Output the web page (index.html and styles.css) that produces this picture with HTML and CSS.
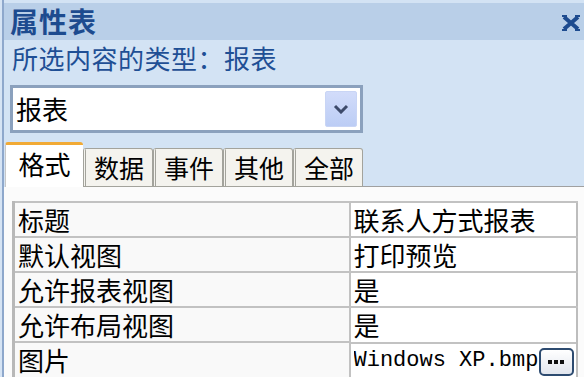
FILE: index.html
```html
<!DOCTYPE html>
<html lang="zh-CN">
<head>
  <meta charset="UTF-8">
  <title>属性表</title>
  <link rel="stylesheet" href="styles.css">
</head>
<body>
  <div class="panel">
    <div class="titlebar">
      <span class="title">属性表</span>
      <svg class="close" width="18" height="16" viewBox="0 0 18 16">
        <path d="M2 2 L16 14 M16 2 L2 14" stroke="#1d4b8f" stroke-width="4" fill="none"/>
        <path d="M0 1h5M13 1h5M0 15h5M13 15h5" stroke="#1d4b8f" stroke-width="2"/>
      </svg>
    </div>
    <div class="kind">所选内容的类型：报表</div>
    <div class="combo">
      <span class="combo-text">报表</span>
      <div class="combo-btn">
        <svg width="16" height="10" viewBox="0 0 16 10">
          <path d="M2 2 L8 8 L14 2" stroke="#3d4a6a" stroke-width="3" fill="none"/>
        </svg>
      </div>
    </div>
    <div class="tabs">
      <div class="tab active">格式</div>
      <div class="tab">数据</div>
      <div class="tab">事件</div>
      <div class="tab">其他</div>
      <div class="tab">全部</div>
      <div class="tab-fill"></div>
    </div>
    <div class="sheet">
      <table class="grid">
        <tr><td class="name">标题</td><td class="val">联系人方式报表</td></tr>
        <tr><td class="name">默认视图</td><td class="val">打印预览</td></tr>
        <tr><td class="name">允许报表视图</td><td class="val">是</td></tr>
        <tr><td class="name">允许布局视图</td><td class="val">是</td></tr>
        <tr>
          <td class="name">图片</td>
          <td class="val pic">
            <span class="file">Windows XP.bmp</span>
            <span class="more">
              <svg width="18" height="6" viewBox="0 0 18 6">
                <rect x="1" y="1" width="4" height="4" fill="#111"/>
                <rect x="7" y="1" width="4" height="4" fill="#111"/>
                <rect x="13" y="1" width="4" height="4" fill="#111"/>
              </svg>
            </span>
          </td>
        </tr>
      </table>
    </div>
  </div>
</body>
</html>
```

FILE: styles.css
```css
*{
  margin: 0;
  padding: 0;
  box-sizing: border-box;
}
body{
  width: 584px;
  height: 377px;
  overflow: hidden;
  background: #d6e4f4;
  padding-left: 2px;
  font-family: "Noto Sans CJK SC", "Liberation Sans", sans-serif;
}
.panel{
  height: 377px;
  border-left: 2px solid #8ea8cc;
  background: #d3e3f4;
  display: flex;
  flex-direction: column;
}
.titlebar{
  margin-top: 3px;
  height: 37px;
  background: #b9cfe8;
  display: flex;
  align-items: center;
  justify-content: space-between;
  padding: 0 4px 0 6px;
}
.title{
  font-size: 28px;
  font-weight: 700;
  letter-spacing: 1px;
  color: #1d4b8f;
  line-height: 37px;
}
.close{
  margin-top: 2px;
}
.kind{
  height: 45px;
  padding: 1px 0 0 8px;
  font-size: 26px;
  letter-spacing: 0.5px;
  line-height: 34px;
  color: #1f4f95;
}
.combo{
  margin-left: 6px;
  width: 353px;
  height: 48px;
  background: #fff;
  border: 3px solid #8ba1bd;
  display: flex;
  align-items: center;
  justify-content: space-between;
  padding: 0 3px 0 3px;
}
.combo-text{
  font-size: 26px;
  line-height: 40px;
  color: #000;
}
.combo-btn{
  width: 32px;
  height: 36px;
  background: linear-gradient(#d2dcfa, #bccdf5);
  border: 1px solid #c9d5f5;
  border-radius: 2px;
  display: flex;
  align-items: center;
  justify-content: center;
}
.tabs{
  margin-top: 9px;
  display: flex;
  align-items: flex-end;
  padding-left: 1px;
}
.tab{
  width: 70px;
  height: 39px;
  background: #f4f3ee;
  border: 1px solid #a3a39c;
  border-left: 3px double #a3a39c;
  border-radius: 3px 3px 0 0;
  font-size: 25px;
  line-height: 36px;
  text-align: center;
  color: #000;
}
.tab.active{
  width: 78px;
  height: 45px;
  background: #fff;
  border: none;
  border-top: 3px solid #f1aa35;
  border-left: 1px solid #c8c8c8;
  font-size: 26px;
  line-height: 38px;
}
.tab-fill{
  flex: 1;
  border-bottom: 1px solid #a0a0a0;
}
.sheet{
  flex: 1;
  background: #fbfbfb;
  padding: 14px 4px 0 8px;
}
.grid{
  width: 566px;
  border-collapse: collapse;
  border-left: 3px solid #b8b8b8;
  border-right: 2px solid #bdbdbd;
}
.grid td{
  height: 35px;
  border-top: 2px solid #c2c2c2;
  font-size: 26px;
  line-height: 32px;
  color: #000;
  padding: 0 0 0 3px;
  white-space: nowrap;
}
.grid .name{
  width: 336px;
  background: #f9f9f9;
  border-right: 2px solid #c2c2c2;
}
.grid .val{
  background: #fff;
}
.pic{
  display: flex;
  align-items: center;
  overflow: hidden;
}
.file{
  font-family: "Liberation Mono", monospace;
  font-size: 22px;
  width: 185px;
  overflow: hidden;
}
.more{
  width: 35px;
  height: 28px;
  border: 2px solid #2d4b70;
  border-radius: 5px;
  background: linear-gradient(#ffffff, #e2e6ee);
  display: flex;
  align-items: center;
  justify-content: center;
  margin-top: 2px;
}
```
